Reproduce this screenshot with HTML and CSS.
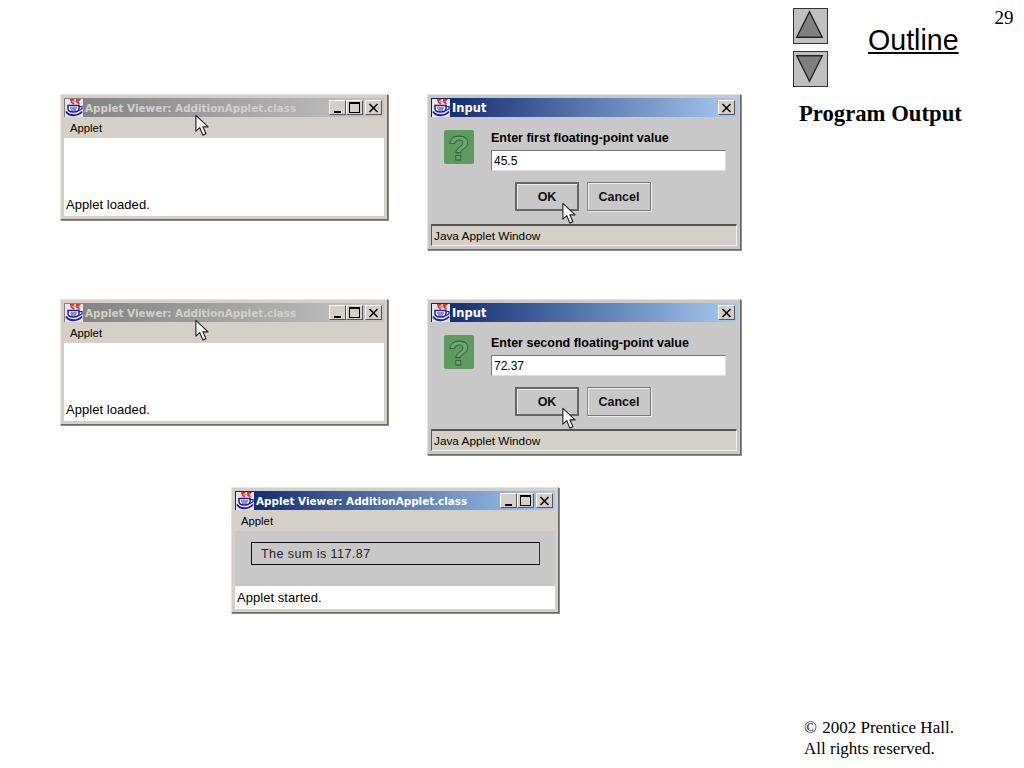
FILE: index.html
```html
<!DOCTYPE html>
<html lang="en">
<head>
    <meta charset="UTF-8">
    <title>Program Output</title>
    <link rel="stylesheet" href="styles.css">
</head>
<body>
    <svg class="defs" width="0" height="0">
        <symbol id="cup" viewBox="0 0 18 18">
            <rect width="18" height="18" fill="#e8e4ee"/>
            <path d="M5 1h3L6.500 3 9 5M11 1h3l-2 2 2.500 2" fill="none" stroke="#d8363a" stroke-width="1.800"/>
            <path d="M7 2.500h4" stroke="#e8a040" stroke-width="1.500"/>
            <path d="M3 6.500h11v3C14 12 11.500 13 8.500 13S3 12 3 9.500z" fill="#fff" stroke="#1c1ca8" stroke-width="1.500"/>
            <path d="M14 7.500h3v2.500l-3 1.500" fill="none" stroke="#1c1ca8" stroke-width="1.200"/>
            <path d="M1 12.500c3 5 12 5 16 0" fill="none" stroke="#1c1ca8" stroke-width="1.800"/>
            <path d="M5 9h7M6 11h5" stroke="#1c1ca8"/>
        </symbol>
        <symbol id="pointer" viewBox="0 0 16 25">
            <path d="M1 1v18l4.500-4 3.500 8.500 3.500-1.500-3.500-8h6z" fill="#fff" stroke="#222" stroke-width="1.300" stroke-linejoin="round"/>
        </symbol>
        <symbol id="close" viewBox="0 0 11 10">
            <path d="M1.500 1l8 8M9.500 1l-8 8" stroke="#111" stroke-width="1.700" fill="none"/>
        </symbol>
    </svg>

    <div class="slide">
        <main class="shots">
            <div class="row">
                <section class="win">
                    <div class="title off">
                        <svg class="cup"><use href="#cup"/></svg>
                        <span class="title-text">Applet Viewer: AdditionApplet.class</span>
                        <div class="ctrls">
                            <span class="ctrl"><i class="min"></i></span>
                            <span class="ctrl"><i class="max"></i></span>
                            <span class="ctrl x"><svg><use href="#close"/></svg></span>
                        </div>
                    </div>
                    <div class="menu">Applet</div>
                    <div class="blank"></div>
                    <div class="status">Applet loaded.</div>
                    <svg class="pointer on-title"><use href="#pointer"/></svg>
                </section>

                <section class="dlg">
                    <div class="title">
                        <svg class="cup"><use href="#cup"/></svg>
                        <span class="title-text short">Input</span>
                        <div class="ctrls"><span class="ctrl x"><svg><use href="#close"/></svg></span></div>
                    </div>
                    <div class="dlg-body">
                        <div class="ask"><span>?</span></div>
                        <div class="form">
                            <label>Enter first floating-point value</label>
                            <div class="field">45.5</div>
                        </div>
                    </div>
                    <div class="btns">
                        <span class="btn active">OK</span>
                        <span class="btn">Cancel</span>
                    </div>
                    <div class="warn">Java Applet Window</div>
                    <svg class="pointer on-ok"><use href="#pointer"/></svg>
                </section>
            </div>

            <div class="row second">
                <section class="win">
                    <div class="title off">
                        <svg class="cup"><use href="#cup"/></svg>
                        <span class="title-text">Applet Viewer: AdditionApplet.class</span>
                        <div class="ctrls">
                            <span class="ctrl"><i class="min"></i></span>
                            <span class="ctrl"><i class="max"></i></span>
                            <span class="ctrl x"><svg><use href="#close"/></svg></span>
                        </div>
                    </div>
                    <div class="menu">Applet</div>
                    <div class="blank"></div>
                    <div class="status">Applet loaded.</div>
                    <svg class="pointer on-title"><use href="#pointer"/></svg>
                </section>

                <section class="dlg">
                    <div class="title">
                        <svg class="cup"><use href="#cup"/></svg>
                        <span class="title-text short">Input</span>
                        <div class="ctrls"><span class="ctrl x"><svg><use href="#close"/></svg></span></div>
                    </div>
                    <div class="dlg-body">
                        <div class="ask"><span>?</span></div>
                        <div class="form">
                            <label>Enter second floating-point value</label>
                            <div class="field">72.37</div>
                        </div>
                    </div>
                    <div class="btns">
                        <span class="btn active">OK</span>
                        <span class="btn">Cancel</span>
                    </div>
                    <div class="warn">Java Applet Window</div>
                    <svg class="pointer on-ok"><use href="#pointer"/></svg>
                </section>
            </div>

            <div class="row third">
                <section class="win">
                    <div class="title">
                        <svg class="cup"><use href="#cup"/></svg>
                        <span class="title-text">Applet Viewer: AdditionApplet.class</span>
                        <div class="ctrls">
                            <span class="ctrl"><i class="min"></i></span>
                            <span class="ctrl"><i class="max"></i></span>
                            <span class="ctrl x"><svg><use href="#close"/></svg></span>
                        </div>
                    </div>
                    <div class="menu">Applet</div>
                    <div class="result-area">
                        <div class="result">The sum is 117.87</div>
                    </div>
                    <div class="status">Applet started.</div>
                </section>
            </div>
        </main>

        <aside class="side">
            <div class="top">
                <div class="arrows">
                    <a class="arrow"><svg viewBox="0 0 35 36"><path d="M17.500 4 31 31H4z"/></svg></a>
                    <a class="arrow"><svg viewBox="0 0 35 36"><path d="M4 5h27L17.500 32z"/></svg></a>
                </div>
                <div class="outline">Outline</div>
                <div class="page-no">29</div>
            </div>
            <h2>Program Output</h2>
            <p class="rights"><span class="copy">©</span> 2002 Prentice Hall.<br>All rights reserved.</p>
        </aside>
    </div>
</body>
</html>
```
FILE: styles.css
```css
* {
    box-sizing: border-box;
}

body {
    margin: 0;
    background: #fff;
    color: #000;
    font-family: 'Liberation Sans', Arial, sans-serif;
}

.defs {
    position: absolute;
}

.slide {
    display: flex;
    width: 1024px;
    height: 768px;
    overflow: hidden;
}

/* left part: the screenshots */
.shots {
    width: 793px;
    padding: 94px 0 0 60px;
}

.row {
    display: flex;
    gap: 39px;
}

.row.second {
    margin-top: 49px;
}

.row.third {
    margin-top: 32px;
    margin-left: 171px;
}

.win,
.dlg {
    position: relative;
    display: flex;
    flex-direction: column;
    padding: 3px;
    background: #d4d0c8;
    border: 1px solid;
    border-color: #e6e4e0 #6a6a6a #6a6a6a #e6e4e0;
    box-shadow: 1px 1px 0 #8a8a8a;
}

.win {
    width: 328px;
    height: 126px;
}

.dlg {
    width: 314px;
    height: 156px;
    background: #c8c8c8;
}

.title {
    display: flex;
    align-items: center;
    flex: none;
    height: 19px;
    padding: 0 2px 0 1px;
    color: #fff;
    background: linear-gradient(90deg, #0a246a, #a6caf0);
}

.title.off {
    color: #d2d0cc;
    background: linear-gradient(90deg, #808080, #c4c4c4);
}

.cup {
    width: 18px;
    height: 18px;
    flex: none;
}

.title-text {
    margin-left: 2px;
    padding-top: 1px;
    font-family: 'DejaVu Sans', Verdana, sans-serif;
    font-size: 10.400px;
    font-weight: bold;
    white-space: nowrap;
}

.title-text.short {
    font-size: 11.500px;
}

.ctrls {
    display: flex;
    margin-left: auto;
}

.ctrl {
    display: flex;
    align-items: center;
    justify-content: center;
    width: 17px;
    height: 15px;
    color: #000;
    background: #d4d0c8;
    border: 1px solid;
    border-color: #fff #555 #555 #fff;
}

.ctrl.x {
    margin-left: 2px;
}

.ctrl.x svg {
    width: 11px;
    height: 10px;
}

.min {
    width: 7px;
    height: 2px;
    margin-top: 8px;
    background: #000;
}

.max {
    width: 11px;
    height: 11px;
    border: 1px solid #000;
    border-top-width: 2px;
}

.menu {
    flex: none;
    height: 21px;
    padding: 4px 0 0 6px;
    font-size: 11.300px;
    line-height: 15px;
    background: #d4d0c8;
}

.blank {
    flex: 1;
    background: #fff;
}

.status {
    flex: none;
    height: 23px;
    padding: 3px 0 0 2px;
    font-size: 13px;
    line-height: 17px;
    letter-spacing: 0.050px;
    background: #fff;
}

.result-area {
    flex: 1;
    padding: 11px 15px 0 16px;
    background: #c8c8c8;
}

.result {
    height: 23px;
    padding-left: 9px;
    font-size: 12.500px;
    line-height: 22px;
    letter-spacing: 0.450px;
    color: #222;
    border: 1px solid #111;
    border-right-color: #333;
}

.dlg-body {
    display: flex;
    padding: 13px 0 0 13px;
}

.ask {
    display: flex;
    align-items: center;
    justify-content: center;
    width: 30px;
    height: 34px;
    background: #5f9a63;
    border-radius: 2px;
}

.ask span {
    font-size: 35px;
    font-weight: bold;
    line-height: 1;
    color: #6ea872;
    -webkit-text-stroke: 0.800px #2f5a34;
}

.form {
    margin-left: 17px;
}

.form label {
    display: block;
    height: 20px;
    font-size: 12.500px;
    font-weight: bold;
    line-height: 16px;
}

.field {
    width: 235px;
    height: 21px;
    padding-left: 2px;
    font-size: 12px;
    line-height: 20px;
    background: #fff;
    border: 1px solid;
    border-color: #777 #ddd #ddd #777;
}

.btns {
    display: flex;
    gap: 8px;
    margin: 11px 0 0 84px;
}

.btn {
    width: 64px;
    height: 29px;
    font-size: 12.500px;
    font-weight: bold;
    line-height: 28px;
    text-align: center;
    color: #111;
    border: 1px solid;
    border-color: #777 #777 #777 #888;
    box-shadow: inset 1px 1px 0 #eee, 1px 1px 0 #eee;
}

.btn.active {
    border: 2px solid #666;
    line-height: 26px;
    box-shadow: inset 1px 1px 0 #eee;
}

.warn {
    margin-top: auto;
    height: 22px;
    padding-left: 2px;
    font-size: 11.800px;
    line-height: 21px;
    background: #d4d0c8;
    border: 1px solid;
    border-color: #555 #eee #eee #555;
    border-top-width: 2px;
}

/* cursors sit over the captured windows */
.pointer {
    position: absolute;
    width: 14px;
    height: 23px;
}

.pointer.on-title {
    left: 134px;
    top: 19px;
}

.pointer.on-ok {
    left: 134px;
    top: 107px;
}

/* right column */
.side {
    display: flex;
    flex-direction: column;
    flex: 1;
    font-family: 'Liberation Serif', 'Times New Roman', serif;
}

.top {
    display: flex;
    height: 99px;
    padding-top: 8px;
}

.arrows {
    display: flex;
    flex-direction: column;
    gap: 7px;
}

.arrow {
    display: block;
    width: 35px;
    height: 36px;
    background: #c0c0c0;
    border: 1px solid #333;
}

.arrow svg {
    display: block;
    width: 100%;
    height: 100%;
    margin: -1px;
}

.arrow path {
    fill: #808080;
    stroke: #222;
    stroke-width: 1.500;
}

.outline {
    margin: 15px 0 0 40px;
    font-family: 'Liberation Sans', Arial, sans-serif;
    font-size: 28.600px;
    line-height: 34px;
    height: 35px;
    text-decoration: underline;
    text-decoration-thickness: 2px;
    text-underline-offset: 2px;
}

.page-no {
    margin: 0 0 0 36px;
    font-size: 19px;
    line-height: 20px;
}

.side h2 {
    margin: 2px 0 0 6px;
    font-size: 22.700px;
    line-height: 26px;
    font-weight: bold;
}

.rights {
    margin: auto 0 9px 11px;
    font-size: 17px;
    line-height: 21px;
}

.copy {
    margin-right: 1px;
}
```
